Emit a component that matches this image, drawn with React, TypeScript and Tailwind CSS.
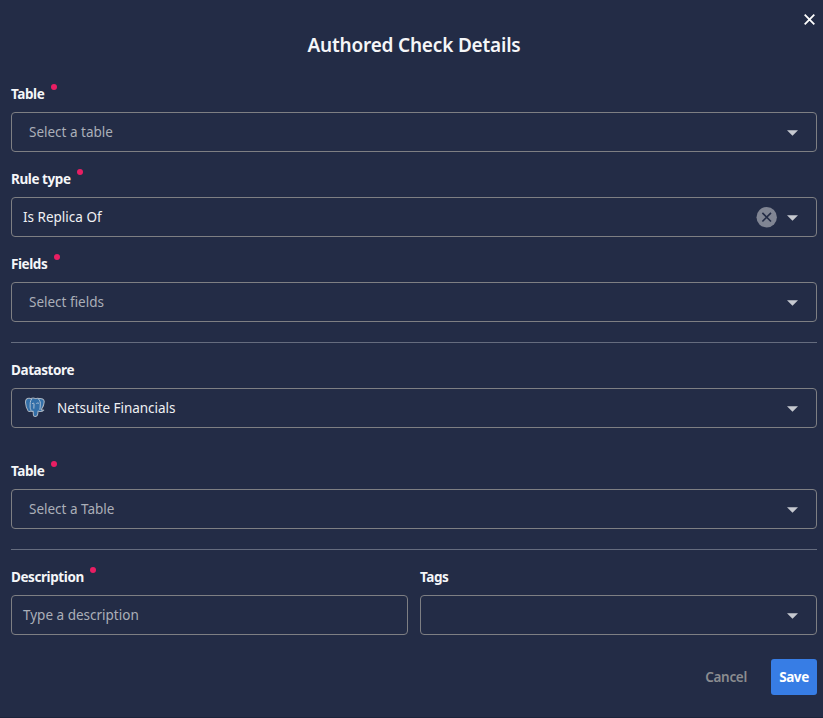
import type { ReactNode } from "react";

const Caret = () => (
  <svg className="mt-px h-[6px] w-[11px] shrink-0" viewBox="0 0 11 6" fill="#c6c9d0">
    <path d="M0 .3h11L5.5 5.7z" />
  </svg>
);

function Label({ children, required }: { children: ReactNode; required?: boolean }) {
  return (
    <div className="mb-[9px] flex h-[18px] items-start text-[13.5px] leading-[18px] font-bold text-[#f5f6f8]">
      <span className="tracking-[-0.42px] whitespace-nowrap">{children}</span>
      {required && <span className="-mt-px ml-[6.500px] size-[6px] rounded-full bg-[#e91e63]" />}
    </div>
  );
}

function Field({ children, caret = true }: { children?: ReactNode; caret?: boolean }) {
  return (
    <div className="flex h-10 items-center rounded-[4px] border border-[#7e7f83] pr-[18px] pl-[11px] text-[13.5px]">
      <div className="flex flex-1 items-center whitespace-nowrap">{children}</div>
      {caret && <Caret />}
    </div>
  );
}

const PostgresIcon = () => (
  <svg className="-mt-0.5 ml-px h-[21px] w-[22px]" viewBox="0 0 22 22" fill="none" strokeLinejoin="round" strokeLinecap="round">
    <path
      d="M5.200 1.400C2.300 1 .8 3 1.100 6c.2 2.600 1.200 6.500 2.600 8.400.9 1.100 1.900 1 2.700.1.700.6 1.700.7 2.700.4l.2 3.400c.1 1.700 1 2.400 2.400 2.100 1.500-.3 2.100-1.200 2.200-2.800l.3-3c1.800.8 4.500.6 5.900-.8-1-.1-1.900-.1-2.600-.4 1.900-2.900 3.300-6.700 3.100-8.900-.1-2.200-2.600-3.400-5.300-2.900-1-.4-2.500-.5-3.700.1-1.900-.9-3.900-.6-5.200.1z"
      fill="#336fa8"
      stroke="#a9b4c1"
      strokeWidth="1.100"
    />
    <path
      d="M7.300 2.500C5.700 4.200 6 7 5.900 9.400c-.1 2 .2 3.700 1.200 4.400M14.800 2.200c1.500 1.500 2.200 4 1.700 6.100-.3 1.600.2 2.900-.3 4.600M8.300 6.800c1-.6 1.700-.3 1.700.5l-.2 4.500M12.800 6.600c.8-.5 1.600-.4 2.200.1"
      stroke="#c2cedb"
      strokeWidth=".9"
    />
  </svg>
);

export default function App() {
  return (
    <div className="flex h-[718px] w-[823px] flex-col border-b border-[#1c243b] bg-[#232c46] pr-[6px] pl-[11px] font-['Noto_Sans',sans-serif]">
      <div className="flex h-[26px] items-end justify-end pr-[2px]">
        <svg className="mb-px h-[11px] w-[11px]" viewBox="0 0 11 11" stroke="#fff" strokeWidth="1.8">
          <path d="M.7.7l9.600 9.600M10.300.7L.7 10.300" />
        </svg>
      </div>
      <h1 className="mt-[6px] mb-[26px] h-[27px] text-center text-[19px] leading-[27px] font-semibold tracking-[-0.19px] text-[#f5f6f8]">
        Authored Check Details
      </h1>

      <Label required>Table</Label>
      <Field><span className="pl-[6px] text-[#abafb8]">Select a table</span></Field>
      <div className="h-[18px]" />
      <Label required>Rule type</Label>
      <Field>
        <span className="flex-1 text-[#f0f1f4]">Is Replica Of</span>
        <svg className="mr-[10px] size-[21px]" viewBox="0 0 21 21">
          <circle cx="10.700" cy="10.200" r="10.200" fill="#808593" />
          <path d="M6.400 5.900l8.600 8.600M15 5.900l-8.600 8.600" stroke="#232c46" strokeWidth="1.600" />
        </svg>
      </Field>
      <div className="h-[18px]" />
      <Label required>Fields</Label>
      <Field><span className="pl-[6px] text-[#abafb8]">Select fields</span></Field>

      <hr className="mt-5 mb-[18px] border-t border-[#656c7e]" />

      <Label>Datastore</Label>
      <Field>
        <PostgresIcon />
        <span className="ml-[11px] tracking-[-0.05px] text-[#f0f1f4]">Netsuite Financials</span>
      </Field>
      <div className="h-[34px]" />
      <Label required>Table</Label>
      <Field><span className="pl-[6px] text-[#abafb8]">Select a Table</span></Field>

      <hr className="mt-5 mb-[18px] border-t border-[#656c7e]" />

      <div className="grid grid-cols-2 gap-3">
        <div>
          <Label required>Description</Label>
          <Field caret={false}><span className="text-[#abafb8]">Type a description</span></Field>
        </div>
        <div>
          <Label>Tags</Label>
          <Field />
        </div>
      </div>

      <div className="mt-6 flex h-9 items-center justify-end text-[13.5px] font-semibold">
        <button className="mr-6 tracking-[-0.3px] text-[#8b8c90]">Cancel</button>
        <button className="h-9 w-[46px] rounded-[3px] bg-[#377de5] font-bold tracking-[-0.4px] text-white">Save</button>
      </div>
    </div>
  );
}
